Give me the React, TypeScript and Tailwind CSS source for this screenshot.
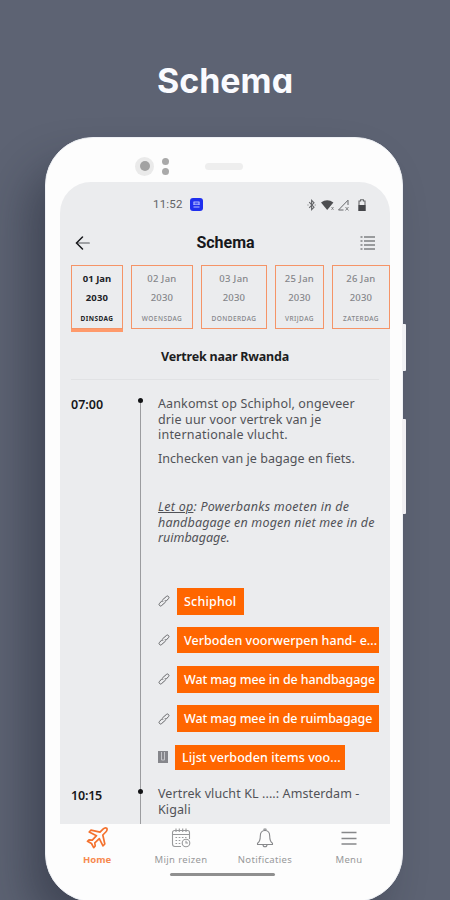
import React from "react";

const days = [
  { date: "01 Jan", day: "DINSDAG", width: "w-[52px]", active: true },
  { date: "02 Jan", day: "WOENSDAG", width: "w-[62px]" },
  { date: "03 Jan", day: "DONDERDAG", width: "w-[66px]" },
  { date: "25 Jan", day: "VRIJDAG", width: "w-[49px]" },
  { date: "26 Jan", day: "ZATERDAG", width: "w-[58px]" },
];

const links = [
  { label: "Schiphol", box: "w-[67px] h-[27px]", text: "tracking-[0.2px]" },
  { label: "Verboden voorwerpen hand- e...", box: "w-[202px] h-[26px]", text: "tracking-[0.03px]" },
  { label: "Wat mag mee in de handbagage", box: "w-[202px] h-[27px]", text: "tracking-[-0.11px]" },
  { label: "Wat mag mee in de ruimbagage", box: "w-[202px] h-[27px]", text: "tracking-[-0.13px]" },
];

function LinkIcon() {
  return (
    <svg className="h-3 w-3" viewBox="0 0 12 12" fill="none" stroke="#66676a" strokeWidth="1" strokeLinecap="round">
      <path d="M4.600 4.800 8.300 1.500a1.500 1.500 0 0 1 2.200 2.100L8.200 6.100 7.100 5.800" />
      <path d="M7.400 7.200 3.700 10.500a1.500 1.500 0 0 1-2.200-2.100L3.800 5.900l1.100.3" />
    </svg>
  );
}

function StatusBar() {
  return (
    <div className="flex h-[44px] items-center pt-[1px] pl-[93px] pr-[22px] font-[Roboto,sans-serif]">
      <span className="text-[11.500px] tracking-[0.2px] text-[#626367]">11:52</span>
      <span className="ml-[7px] flex h-[13px] w-[13px] items-center justify-center rounded-[3px] bg-[#1f2fee]">
        <svg className="h-[7px] w-[7px]" viewBox="0 0 7 7" fill="none" stroke="#b9c1ff" strokeWidth="1">
          <path d="M.5 1h6M.5 3.200h6M.5 6h6M1 1v3M6 1v3" />
        </svg>
      </span>
      <svg className="ml-auto h-[14px] w-[62px]" viewBox="0 0 62 14">
        <path d="M3.200 4.200 8 9.200 5.600 11.600V2.400L8 4.800 3.200 9.800" fill="none" stroke="#66676a" strokeWidth="1.100" />
        <path d="M1.500 7h1M8.700 7h1" stroke="#77787b" />
        <path d="M15 4.600Q21.200 0 27.400 4.600L21.200 12Z" fill="#4d4e51" />
        <path d="M24.500 8.500h4v4h-3z" fill="#ebecee" />
        <path d="M25.500 9l2 2.800M27.500 9l-2 2.800" stroke="#77787b" strokeWidth=".8" />
        <path d="M32.500 12 42 2.200V7M32.500 12h5" fill="none" stroke="#66676a" strokeWidth="1" />
        <path d="m39.500 9 3 3.500M42.500 9l-3 3.500" stroke="#77787b" strokeWidth=".9" />
        <path d="M53 3h1.600V1.800h2.800V3H59v9.500h-6z" fill="none" stroke="#66676a" strokeWidth="1.100" />
        <path d="M52.500 7h7v6h-7z" fill="#45464a" />
      </svg>
    </div>
  );
}

function Header() {
  return (
    <div className="flex h-[33px] items-center justify-between pl-[15px] pr-[14px]">
      <svg className="h-[16px] w-[16px]" viewBox="0 0 16 16" fill="none" strokeLinecap="round">
        <path d="M2 8h12.300" stroke="#55565a" strokeWidth="1.200" />
        <path d="M7.500 2 1.500 8l6 6" stroke="#17181b" strokeWidth="1.500" />
      </svg>
      <h2 className="font-[Roboto,sans-serif] text-[16px] font-bold text-[#17181c]">Schema</h2>
      <svg className="h-[16px] w-[16px]" viewBox="0 0 16 16" fill="none" stroke="#7f8083" strokeWidth="1.600">
        <path d="M.5 2h2M.5 6h2M.5 10h2M.5 14h2M4 2h11M4 6h11M4 10h11M4 14h11" />
      </svg>
    </div>
  );
}

function DayTabs() {
  return (
    <div className="mt-[6px] flex h-[67px] gap-2 pl-[11px]">
      {days.map((d) => (
        <div key={d.date} className={`${d.width} shrink-0`}>
          <div
            className={`flex h-[64px] flex-col items-center border border-[#f59467] whitespace-nowrap ${
              d.active ? "font-bold text-[#222327]" : "font-medium text-[#85868a]"
            }`}
          >
            <span className={`mt-[4px] text-[9.500px] leading-[18px] ${d.active ? "tracking-normal" : "tracking-[0.3px]"}`}>
              {d.date}
            </span>
            <span className="mt-[1px] text-[9.500px] leading-[18px] tracking-[0.2px]">2030</span>
            <span className="mt-[7px] text-[6.500px] leading-[10px] tracking-[0.45px]">{d.day}</span>
          </div>
          {d.active && <div className="h-[3px] bg-[#ff9a6b]" />}
        </div>
      ))}
    </div>
  );
}

function Timeline() {
  return (
    <div className="flex h-[439px] pl-[11px] text-[12.500px] leading-[15.700px] text-[#515257]">
      <div className="flex w-[63px] flex-col font-semibold text-[#17181c]">
        <span className="mt-[12px]">07:00</span>
        <span className="mt-[375px] tracking-[-0.2px]">10:15</span>
      </div>
      <div className="relative w-[13px]">
        <div className="mx-auto mt-[15px] h-full w-[1.500px] bg-[#9b9c9f]" />
        <span className="absolute top-[13px] left-[4px] h-[5px] w-[5px] rounded-full bg-[#121315]" />
        <span className="absolute top-[404px] left-[4px] h-[5px] w-[5px] rounded-full bg-[#121315]" />
      </div>
      <div className="flex flex-col pl-[11px] whitespace-nowrap">
        <p className="mt-[11px] tracking-[0.13px]">
          Aankomst op Schiphol, ongeveer
          <br />
          drie uur voor vertrek van je
          <br />
          <span className="tracking-[0.22px]">internationale vlucht.</span>
        </p>
        <p className="mt-[8px] tracking-[0.05px]">Inchecken van je bagage en fiets.</p>
        <p className="mt-[32px] italic">
          <span className="tracking-[0.26px]">
            <span className="underline">Let op</span>: Powerbanks moeten in de
          </span>
          <br />
          <span className="tracking-[0.17px]">handbagage en mogen niet mee in de</span>
          <br />
          ruimbagage.
        </p>
        <div className="mt-[42px] flex flex-col gap-[12.500px] font-medium text-white">
          {links.map((l) => (
            <div key={l.label} className="flex items-center gap-[7px]">
              <LinkIcon />
              <div className={`flex items-center bg-[#ff6600] pl-[7px] ${l.box}`}>
                <span className={l.text}>{l.label}</span>
              </div>
            </div>
          ))}
          <div className="flex items-center">
            <svg className="h-[12px] w-[10px]" viewBox="0 0 10 12">
              <path d="M0 0h10v12H0z" fill="#85868b" />
              <path d="M3.500 1v8h3V1" fill="none" stroke="#c4c5c9" strokeWidth="1" />
            </svg>
            <div className="ml-[7px] flex h-[25px] w-[170px] items-center bg-[#ff6600] pl-[7px]">
              <span className="tracking-[0.08px]">Lijst verboden items voo...</span>
            </div>
          </div>
        </div>
        <p className="mt-[16px] tracking-[0.1px]">
          Vertrek vlucht KL ....: Amsterdam -
          <br />
          Kigali
        </p>
      </div>
    </div>
  );
}

function PlaneIcon() {
  return (
    <svg className="h-[22px] w-[22px]" viewBox="0 0 22 22" fill="none" stroke="#f4722e" strokeWidth="1.700" strokeLinejoin="round">
      <path d="M20.800 1.200c-1.300-.6-2.800 0-3.800 1l-3 3L5 3.200 3.200 5l7.300 3.700-4.200 4.500-3.300-.4L1.500 14.300l4 2.200 2.200 4.200L9.200 19l-.4-3.200 4.500-4.200 3.700 7.200L18.800 17 16.800 8l3-3c1-1 1.600-2.500 1-3.800Z" />
    </svg>
  );
}

function CalendarIcon() {
  return (
    <svg className="h-[20px] w-[20px]" viewBox="0 0 20 20" fill="none" stroke="#98999b" strokeWidth="1.100">
      <path d="M10 18.500H4A2.500 2.500 0 0 1 1.500 16V4.500A2 2 0 0 1 3.500 2.500h13a2 2 0 0 1 2 2V11M1.500 6.500h17" />
      <path d="M5 .5v3.500M8.300.5v3.500M11.700.5v3.500M15 .5v3.500" />
      <path d="M4.500 9.500h11M4.500 12.500h6M4.500 15.500h5" strokeDasharray="1.600 1.600" />
      <circle cx="15" cy="15" r="3.800" />
      <path d="M15 12.800V15h2" />
    </svg>
  );
}

function BellIcon() {
  return (
    <svg className="h-[20px] w-[18px]" viewBox="0 0 18 20" fill="none" stroke="#88898c" strokeWidth="1.100" strokeLinejoin="round">
      <path d="M9 2.500c-3.200 0-4.700 2.300-4.700 5.500 0 4.500-.8 6-2.800 7.200V16.500h15v-1.300c-2-1.200-2.800-2.700-2.800-7.200 0-3.200-1.500-5.500-4.700-5.500ZM8 2.500V1h2v1.500M7 16.800a2 2 0 0 0 4 0" />
    </svg>
  );
}

function MenuIcon() {
  return (
    <svg className="h-[20px] w-[16px]" viewBox="0 0 16 20" stroke="#87888a" strokeWidth="1.300">
      <path d="M.5 4.500h15M.5 10.500h15M.5 16h15" />
    </svg>
  );
}

function NavItem({ label, active, children }: { label: string; active?: boolean; children: React.ReactNode }) {
  return (
    <div className="flex w-[84px] shrink-0 flex-col items-center">
      <div className="flex h-[26px] items-center">{children}</div>
      <span
        className={`mt-[2px] text-[9.500px] leading-[14px] whitespace-nowrap ${
          active ? "font-bold text-[#f7894f]" : "tracking-[0.35px] text-[#97989a]"
        }`}
      >
        {label}
      </span>
    </div>
  );
}

export default function App() {
  return (
    <main className="relative flex h-[900px] w-[450px] flex-col items-center overflow-hidden bg-[#5d6373] font-['Noto_Sans',sans-serif]">
      <h1 className="mt-[57px] h-[80px] shrink-0 font-[Inter,sans-serif] text-[34px] leading-[48px] font-bold text-[#fafbff] [font-feature-settings:'cv11']">
        Schema
      </h1>
      <div className="relative mr-[2px] h-[765px] w-[358px] shrink-0 rounded-[48px] border border-[#eff1f5] bg-[#fdfdfd] pr-[13px] pl-[14px] shadow-[-20px_26px_45px_-4px_rgba(25,28,42,0.42)]">
        <span className="absolute top-[186px] -right-[4px] h-[47px] w-[4px] rounded-r-[1px] bg-[#f1f2f5]" />
        <span className="absolute top-[281px] -right-[4px] h-[95px] w-[4px] rounded-r-[1px] bg-[#f1f0f3]" />
        <div className="flex h-[44px] items-center pt-[12px] pl-[75px]">
          <span className="flex h-[19px] w-[19px] items-center justify-center rounded-full bg-[#eaeaea]">
            <span className="h-[10px] w-[10px] rounded-full bg-[#a2a2a2]" />
          </span>
          <span className="ml-[8px] flex flex-col gap-[3px]">
            <span className="h-[7px] w-[7px] rounded-full bg-[#a9a9a9]" />
            <span className="h-[7px] w-[7px] rounded-full bg-[#a9a9a9]" />
          </span>
          <span className="ml-[36px] h-[7px] w-[38px] rounded-full bg-[#eeeeee]" />
        </div>
        <div className="h-[642px] w-[330px] overflow-hidden rounded-t-[31px] bg-[#ebecee]">
          <StatusBar />
          <Header />
          <DayTabs />
          <h3 className="mt-[15px] h-[20px] text-center text-[12.500px] leading-[20px] font-bold tracking-[-0.22px] text-[#1c1d21]">
            Vertrek naar Rwanda
          </h3>
          <div className="mx-[11px] mt-[12px] mb-[5px] h-px bg-[#e1e2e4]" />
          <Timeline />
        </div>
        <nav className="-ml-[5px] flex h-[49px] pt-[1px]">
          <NavItem label="Home" active>
            <PlaneIcon />
          </NavItem>
          <NavItem label="Mijn reizen">
            <CalendarIcon />
          </NavItem>
          <NavItem label="Notificaties">
            <BellIcon />
          </NavItem>
          <NavItem label="Menu">
            <MenuIcon />
          </NavItem>
        </nav>
        <div className="ml-[110px] h-[3px] w-[105px] rounded-full bg-[#8f8f8f]" />
      </div>
    </main>
  );
}
